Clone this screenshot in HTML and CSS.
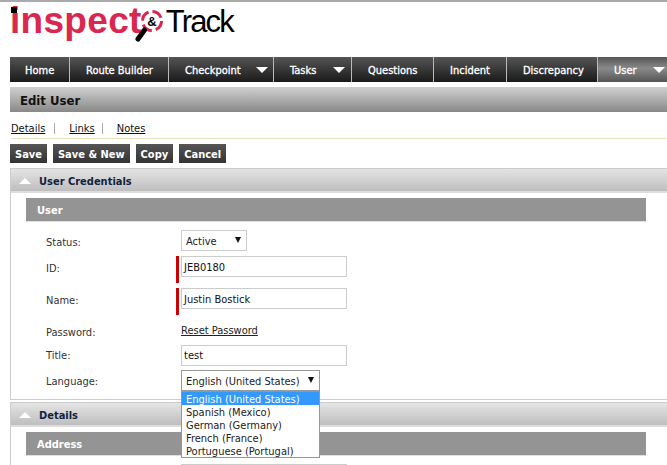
FILE: index.html
```html
<!DOCTYPE html>
<html lang="en">
<head>
<meta charset="utf-8">
<title>Edit User</title>
<link rel="stylesheet" href="styles.css">
</head>
<body>
<header class="logo">
  <span class="logo-inspect">inspect</span>
  <svg class="logo-mark" width="36" height="42" viewBox="0 0 36 42">
    <circle cx="21" cy="19" r="9.5" fill="none" stroke="#d9274f" stroke-width="3" stroke-dasharray="11 4"/>
    <path d="M13.5 28 L7 37" stroke="#000" stroke-width="5" stroke-linecap="round"/>
    <text x="21" y="24" text-anchor="middle" class="logo-amp">&amp;</text>
  </svg>
  <span class="logo-track">Track</span>
</header>
<nav class="nav">
  <a class="nav-item w-home">Home</a>
  <a class="nav-item w-route">Route Builder</a>
  <a class="nav-item w-check">Checkpoint<i class="caret"></i></a>
  <a class="nav-item w-tasks">Tasks<i class="caret"></i></a>
  <a class="nav-item w-quest">Questions</a>
  <a class="nav-item w-inc">Incident</a>
  <a class="nav-item w-disc">Discrepancy</a>
  <a class="nav-item w-user active">User<i class="caret"></i></a>
</nav>
<h1 class="title">Edit User</h1>
<div class="tabs">
  <a>Details</a><span class="sep sep-a"></span><a>Links</a><span class="sep sep-b"></span><a>Notes</a>
</div>
<div class="actions">
  <button class="btn">Save</button>
  <button class="btn">Save &amp; New</button>
  <button class="btn">Copy</button>
  <button class="btn">Cancel</button>
</div>
<section class="panel">
  <h2 class="panel-head"><i class="up"></i>User Credentials</h2>
  <h3 class="sub-head">User</h3>
  <div class="form">
    <div class="row r-status"><label>Status:</label><div class="select s-status">Active<i class="arrow"></i></div></div>
    <div class="row r-req"><label>ID:</label><div class="req"><div class="input">JEB0180</div></div></div>
    <div class="row r-req"><label>Name:</label><div class="req"><div class="input">Justin Bostick</div></div></div>
    <div class="row r-pass"><label>Password:</label><a class="reset">Reset Password</a></div>
    <div class="row r-title"><label>Title:</label><div class="input">test</div></div>
    <div class="row r-lang"><label>Language:</label>
      <div class="select s-lang">English (United States)<i class="arrow"></i>
        <ul class="menu">
          <li class="sel">English (United States)</li>
          <li>Spanish (Mexico)</li>
          <li>German (Germany)</li>
          <li>French (France)</li>
          <li>Portuguese (Portugal)</li>
        </ul>
      </div>
    </div>
  </div>
</section>
<section class="panel panel-2">
  <h2 class="panel-head"><i class="up"></i>Details</h2>
  <h3 class="sub-head">Address</h3>
  <div class="stub"></div>
</section>
</body>
</html>
```
FILE: styles.css
```css
html, body { margin: 0; padding: 0; height: 465px; overflow: hidden; background: #fff; }
body { font-family: "DejaVu Sans Condensed", "DejaVu Sans", sans-serif; font-size: 11px; color: #333; border-top: 2px solid #aaa; box-sizing: border-box; }

.logo { height: 55px; padding-left: 10px; display: flex; align-items: flex-start; box-sizing: border-box; position: relative; }
.logo::before { content: ""; position: absolute; left: 11px; top: 5px; width: 6px; height: 6px; background: #000; }
.logo-inspect { font-family: "Liberation Sans", sans-serif; font-weight: bold; font-size: 37px; line-height: 40px; color: #d9274f; letter-spacing: 0.3px; margin-top: -1px; }
.logo-mark { margin-left: -11px; flex: none; }
.logo-amp { font-family: "Liberation Sans", sans-serif; font-weight: bold; font-size: 13px; fill: #000; }
.logo-track { font-family: "Liberation Sans", sans-serif; font-size: 31px; line-height: 36px; color: #000; letter-spacing: -1.8px; margin-left: -1px; margin-top: 2px; }

.nav { margin-left: 10px; height: 25px; display: flex; background: linear-gradient(#555, #1a1a1a); }
.nav-item { box-sizing: border-box; display: flex; align-items: center; padding: 2px 0 0 16px; color: #fff; font-weight: normal; font-size: 11px; border-right: 1px solid #bbb; position: relative; -webkit-text-stroke: 0.3px #fff; }
.w-home { width: 60px; padding-left: 15px; } .w-route { width: 99px; } .w-check { width: 105px; } .w-tasks { width: 78px; }
.w-quest { width: 82px; } .w-inc { width: 73px; } .w-disc { width: 91px; } .w-user { width: 69px; border-right: 0; }
.active { background: linear-gradient(#555, #8a8a8a 45%, #555); }
.caret { position: absolute; right: 6px; top: 10px; width: 0; height: 0; border-left: 6px solid transparent; border-right: 6px solid transparent; border-top: 6px solid #fff; }
.w-check .caret { right: 5px; } .w-tasks .caret { right: 6px; } .w-user .caret { right: 2px; }

.title { margin: 5px 0 0 10px; height: 25px; line-height: 27px; padding-left: 10px; font-size: 13px; font-weight: bold; color: #111; background: linear-gradient(#d0d0d0, #888); box-sizing: border-box; }

.tabs { margin: 0 0 0 11px; height: 27px; padding-top: 7px; box-sizing: border-box; border-bottom: 1px solid #e6e0bb; display: flex; align-items: center; font-size: 11px; color: #111; }
.tabs a { text-decoration: underline; }
.sep { display: block; width: 1px; height: 11px; background: #aaa; }
.sep-a { margin: 0 14px 0 9px; } .sep-b { margin: 0 14px 0 7px; }

.actions { margin: 5px 0 0 10px; display: flex; gap: 6px; height: 19px; }
.btn { border: 0; padding: 1px 5px 0; height: 19px; color: #fff; font: bold 11px "DejaVu Sans Condensed", sans-serif; background: linear-gradient(#555, #333); }

.panel { margin: 5px 0 0 10px; border-left: 1px solid #ccc; border-bottom: 1px solid #ccc; height: 232px; box-sizing: border-box; }
.panel-2 { margin-top: 2px; border-bottom: 0; height: 70px; }
.panel-head { margin: 0; height: 25px; box-sizing: border-box; padding: 2px 0 0 8px; border-top: 1px solid #ccc; border-bottom: 2px solid #ddd; background: linear-gradient(#e4e4e4, #bebebe); display: flex; align-items: center; font-size: 11px; font-weight: bold; color: #12233f; }
.up { width: 0; height: 0; border-left: 6px solid transparent; border-right: 6px solid transparent; border-bottom: 6px solid #fff; margin-right: 8px; }
.sub-head { margin: 5px 21px 0 15px; height: 24px; line-height: 25px; box-sizing: border-box; padding-left: 11px; border-bottom: 1px solid #e6e0bb; background: #949494; color: #fff; font-size: 11px; font-weight: bold; }

.form { position: relative; padding-left: 35px; padding-top: 8px; }
.row { display: flex; align-items: flex-start; }
.row label { width: 135px; flex: none; color: #333; padding-top: 6px; }
.r-status { height: 26px; } .r-req { height: 32px; } .r-pass { height: 25px; } .r-title { height: 25px; }
.r-title label { padding-top: 4px; } .r-lang label { padding-top: 5px; }
.input { box-sizing: border-box; width: 166px; height: 21px; line-height: 21px; border: 1px solid #ccc; padding-left: 2px; color: #111; }
.r-title .input { line-height: 19px; }
.req { border-left: 3px solid #c00; height: 27px; margin-left: -5px; padding-left: 2px; }
.r-pass .reset { text-decoration: underline; color: #222; padding-top: 4px; }
.select { box-sizing: border-box; position: relative; height: 21px; line-height: 21px; border: 1px solid #ccc; padding-left: 4px; color: #222; }
.s-status { width: 66px; } .s-lang { width: 139px; border-color: #999; }
.arrow { position: absolute; top: 6px; right: 5px; width: 0; height: 0; border-left: 3px solid transparent; border-right: 3px solid transparent; border-top: 6px solid #111; }
.menu { position: absolute; left: -1px; top: 20px; width: 139px; box-sizing: border-box; margin: 0; padding: 0; list-style: none; background: #fff; border: 1px solid #7f9db9; z-index: 2; line-height: 15px; }
.menu li { padding-left: 4px; height: 13px; }
.menu .sel { background: #3399ff; color: #fff; }

.stub { margin: 8px 0 0 170px; width: 166px; border-top: 1px solid #ccc; }
```
